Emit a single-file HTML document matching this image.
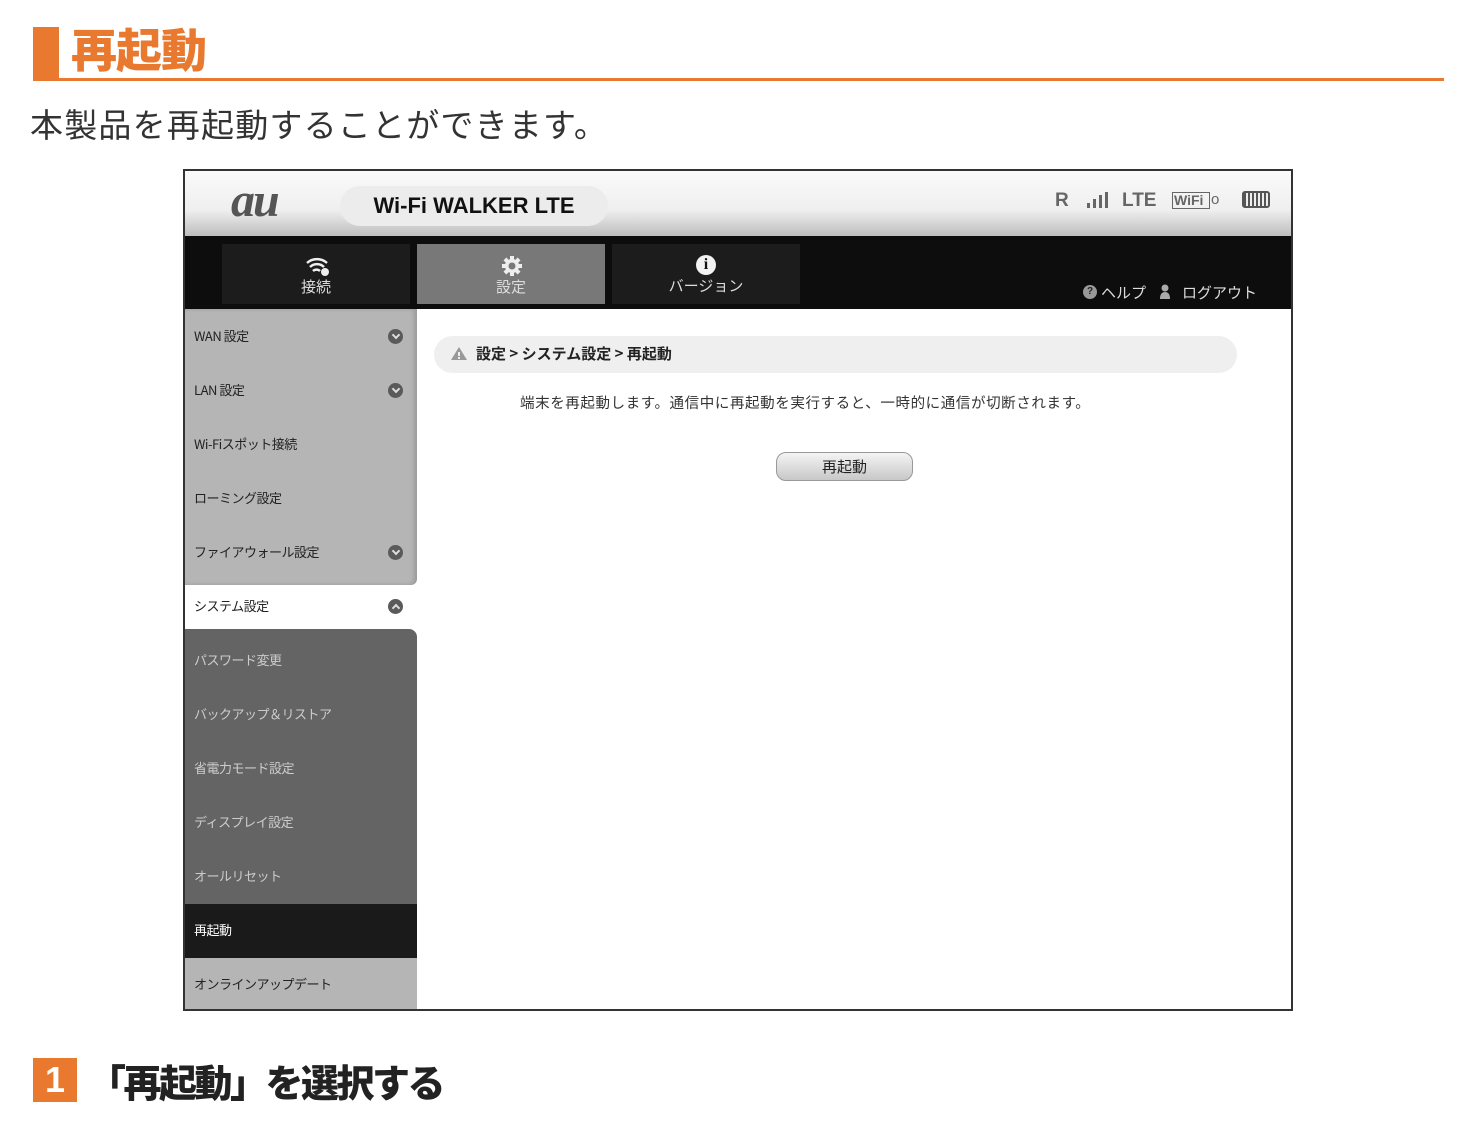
<!DOCTYPE html>
<html><head><meta charset="utf-8"><style>
*{margin:0;padding:0;box-sizing:border-box}
body{width:1466px;height:1122px;background:#fff;position:relative;overflow:hidden;font-family:"Liberation Sans","Noto Sans CJK JP",sans-serif;color:#222}
.a{position:absolute}
.jp{font-family:"Noto Sans CJK JP",sans-serif}
.side{position:absolute;left:0;width:232px;height:54px;font-size:13px;line-height:54px;padding-left:9px;letter-spacing:-0.5px}
.chev{position:absolute;right:14px;top:20px;width:15px;height:15px;border-radius:50%;background:#5a5a5a}
.chev:after{content:"";position:absolute;left:4.5px;top:3px;width:4px;height:4px;border-right:2px solid #ddd;border-bottom:2px solid #ddd;transform:rotate(45deg)}
.chev.up:after{top:6px;transform:rotate(-135deg)}
</style></head><body>
<div class="a" style="left:33px;top:27px;width:26px;height:53px;background:#e8792f"></div>
<div class="a jp" style="left:71px;top:17px;font-size:46px;font-weight:900;color:#e8792f;line-height:62px;letter-spacing:-1px">再起動</div>
<div class="a" style="left:33px;top:78px;width:1411px;height:3px;background:#e8792f"></div>
<div class="a jp" style="left:30px;top:100px;font-size:33px;line-height:46px;color:#333;letter-spacing:1.2px">本製品を再起動することができます。</div>

<div class="a" style="left:183px;top:169px;width:1110px;height:842px;border:2px solid #333;background:#fff;overflow:hidden">
  <div class="a" style="left:0;top:0;width:1106px;height:65px;background:linear-gradient(#fafafa,#efefef 60%,#bdbdbd)"></div>
  <div class="a" style="left:46px;top:2px;font-family:'Liberation Serif',serif;font-style:italic;font-weight:bold;font-size:48px;color:#555;line-height:56px;letter-spacing:-2px">au</div>
  <div class="a" style="left:155px;top:15px;width:268px;height:40px;border-radius:20px;background:#ececec;font-weight:bold;font-size:22px;line-height:40px;text-align:center;color:#111">Wi-Fi WALKER LTE</div>
  <div class="a" style="left:870px;top:18px;font-weight:bold;font-size:19px;color:#666;line-height:24px">R</div>
  <svg class="a" style="left:900px;top:20px" width="26" height="20"><rect x="2" y="12" width="3" height="5" fill="#666"/><rect x="8" y="8" width="3" height="9" fill="#666"/><rect x="14" y="4" width="3" height="13" fill="#666"/><rect x="20" y="1" width="3" height="16" fill="#666"/></svg>
  <div class="a" style="left:937px;top:18px;font-weight:bold;font-size:19px;color:#666;line-height:24px">LTE</div>
  <div class="a" style="left:987px;top:21px;width:38px;height:17px;border:1.5px solid #666;font-weight:bold;font-size:14px;color:#666;line-height:14px;padding-left:1px">WiFi</div>
  <div class="a" style="left:1026px;top:20px;font-size:15px;color:#666">o</div>
  <div class="a" style="left:1057px;top:20px;width:28px;height:17px;border:2px solid #555;border-radius:3px;background:repeating-linear-gradient(90deg,#555 0 2px,#eee 2px 4px)"></div>
  <div class="a" style="left:0;top:65px;width:1106px;height:73px;background:#0d0d0d"></div>
  <div class="a" style="left:37px;top:73px;width:188px;height:60px;background:#1c1c1c"></div>
  <div class="a" style="left:232px;top:73px;width:188px;height:60px;background:#787878"></div>
  <div class="a" style="left:427px;top:73px;width:188px;height:60px;background:#1c1c1c"></div>
  <svg class="a" style="left:119px;top:84px" width="28" height="22"><path d="M3 8a15 15 0 0 1 20 0M6 12a10 10 0 0 1 14 0M9 16a5 5 0 0 1 7 0" stroke="#eee" stroke-width="2.5" fill="none"/><circle cx="21" cy="17" r="4" fill="#eee"/></svg>
  <div class="a jp" style="left:37px;top:105px;width:188px;text-align:center;color:#ddd;font-size:15px">接続</div>
  <svg class="a" style="left:316px;top:84px" width="22" height="22" viewBox="0 0 22 22"><g fill="#eee"><circle cx="11" cy="11" r="7"/><rect x="9" y="1" width="4" height="20"/><rect x="1" y="9" width="20" height="4"/><rect x="9" y="1" width="4" height="20" transform="rotate(45 11 11)"/><rect x="9" y="1" width="4" height="20" transform="rotate(-45 11 11)"/></g><circle cx="11" cy="11" r="3.5" fill="#787878"/></svg>
  <div class="a jp" style="left:232px;top:105px;width:188px;text-align:center;color:#ddd;font-size:15px">設定</div>
  <div class="a" style="left:511px;top:84px;width:20px;height:20px;border-radius:50%;background:#f2f2f2;color:#111;font-weight:bold;font-family:'Liberation Serif',serif;font-size:16px;line-height:20px;text-align:center">i</div>
  <div class="a jp" style="left:427px;top:104px;width:188px;text-align:center;color:#ddd;font-size:15px">バージョン</div>
  <div class="a" style="left:898px;top:114px;width:14px;height:14px;border-radius:50%;background:#999;color:#222;font-size:10px;font-weight:bold;line-height:14px;text-align:center">?</div>
  <div class="a jp" style="left:916px;top:111px;color:#ddd;font-size:15px">ヘルプ</div>
  <svg class="a" style="left:974px;top:113px" width="12" height="16"><circle cx="6" cy="4" r="3.5" fill="#aaa"/><path d="M1 15q0-7 5-7t5 7z" fill="#aaa"/></svg>
  <div class="a jp" style="left:997px;top:111px;color:#ddd;font-size:15px">ログアウト</div>
  <div class="a" style="left:0;top:138px;width:232px;height:276px;background:#b5b5b5;border-radius:0 0 6px 0;box-shadow:inset -3px 0 4px rgba(0,0,0,.15)"></div>
  <div class="a" style="left:0;top:458px;width:232px;height:276px;background:#646464;border-radius:0 8px 0 0"></div>
  <div class="a" style="left:0;top:733px;width:232px;height:54px;background:#1a1a1a"></div>
  <div class="a" style="left:0;top:787px;width:232px;height:60px;background:#b5b5b5"></div>
  <div class="side jp" style="top:138px;color:#222">WAN 設定<span class="chev"></span></div>
  <div class="side jp" style="top:192px;color:#222">LAN 設定<span class="chev"></span></div>
  <div class="side jp" style="top:246px;color:#222">Wi-Fiスポット接続</div>
  <div class="side jp" style="top:300px;color:#222">ローミング設定</div>
  <div class="side jp" style="top:354px;color:#222">ファイアウォール設定<span class="chev"></span></div>
  <div class="side jp" style="top:408px;color:#222">システム設定<span class="chev up"></span></div>
  <div class="side jp" style="top:462px;color:#ccc">パスワード変更</div>
  <div class="side jp" style="top:516px;color:#ccc">バックアップ＆リストア</div>
  <div class="side jp" style="top:570px;color:#ccc">省電力モード設定</div>
  <div class="side jp" style="top:624px;color:#ccc">ディスプレイ設定</div>
  <div class="side jp" style="top:678px;color:#ccc">オールリセット</div>
  <div class="side jp" style="top:732px;color:#fff">再起動</div>
  <div class="side jp" style="top:786px;color:#222">オンラインアップデート</div>
  <div class="a" style="left:249px;top:165px;width:803px;height:37px;border-radius:19px;background:#efefef"></div>
  <svg class="a" style="left:265px;top:175px" width="18" height="15"><path d="M9 1L17 14H1z" fill="#999"/><rect x="8" y="6" width="2" height="4" fill="#efefef"/><rect x="8" y="11" width="2" height="2" fill="#efefef"/></svg>
  <div class="a jp" style="left:291px;top:172px;font-size:15px;font-weight:bold;color:#222;line-height:22px">設定 &gt; システム設定 &gt; 再起動</div>
  <div class="a jp" style="left:335px;top:221px;font-size:14.5px;color:#333;line-height:22px;letter-spacing:0.6px">端末を再起動します。通信中に再起動を実行すると、一時的に通信が切断されます。</div>
  <div class="a jp" style="left:591px;top:281px;width:137px;height:29px;border-radius:10px;border:1px solid #999;background:linear-gradient(#f4f4f4,#c8c8c8);font-size:15px;line-height:27px;text-align:center;color:#222">再起動</div>
</div>

<div class="a" style="left:33px;top:1058px;width:44px;height:44px;background:#e8792f;color:#fff;font-weight:bold;font-size:36px;line-height:44px;text-align:center">1</div>
<div class="a jp" style="left:88px;top:1053px;font-size:38px;font-weight:900;color:#222;line-height:56px;letter-spacing:-2.5px">「再起動」を選択する</div>
</body></html>
